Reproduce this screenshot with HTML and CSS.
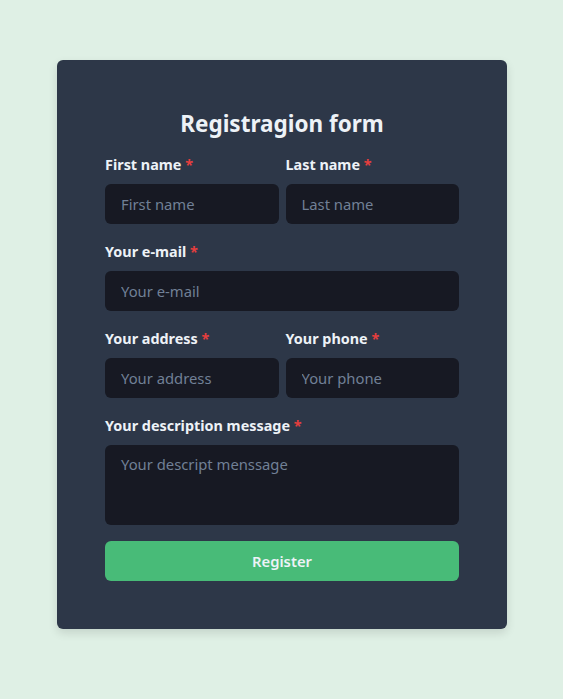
FILE: index.html
```html
<!DOCTYPE html>
<html lang="en">
<head>
<meta charset="utf-8">
<title>Registration form</title>
<link rel="stylesheet" href="styles.css">
</head>
<body>
<main class="page">
  <form class="card">
    <h1 class="title">Registragion form</h1>
    <div class="row">
      <div class="field">
        <label class="label">First name <span class="req">*</span></label>
        <input class="input" type="text" placeholder="First name">
      </div>
      <div class="field">
        <label class="label">Last name <span class="req">*</span></label>
        <input class="input" type="text" placeholder="Last name">
      </div>
    </div>
    <div class="field">
      <label class="label">Your e-mail <span class="req">*</span></label>
      <input class="input" type="email" placeholder="Your e-mail">
    </div>
    <div class="row">
      <div class="field">
        <label class="label">Your address <span class="req">*</span></label>
        <input class="input" type="text" placeholder="Your address">
      </div>
      <div class="field">
        <label class="label">Your phone <span class="req">*</span></label>
        <input class="input" type="text" placeholder="Your phone">
      </div>
    </div>
    <div class="field">
      <label class="label">Your description message <span class="req">*</span></label>
      <textarea class="input textarea" placeholder="Your descript menssage"></textarea>
    </div>
    <button class="button" type="button">Register</button>
  </form>
</main>
</body>
</html>
```
FILE: styles.css
```css
* { box-sizing: border-box; }
html, body { margin: 0; padding: 0; }
body {
  background: #dff0e5;
  font-family: "Noto Sans", "Open Sans", sans-serif;
  color: #edf2f7;
  width: 563px;
  height: 699px;
}
.page {
  padding-top: 60px;
  padding-left: 57px;
}
.card {
  width: 450px;
  background: #2d3748;
  border-radius: 6px;
  padding: 48px;
  box-shadow: 0 4px 10px rgba(0, 0, 0, 0.12);
  display: flex;
  flex-direction: column;
  gap: 15px;
}
.title {
  margin: 0 0 -3px;
  font-size: 22.5px;
  line-height: 32px;
  font-weight: 700;
  text-align: center;
  color: #edf2f7;
}
.row {
  display: flex;
  gap: 7px;
}
.row .field { flex: 1; min-width: 0; }
.field {
  display: flex;
  flex-direction: column;
  gap: 7px;
}
.label {
  padding-top: 1px;
  font-size: 14.4px;
  line-height: 24px;
  font-weight: 700;
  color: #edf2f7;
}
.req { color: #e53e3e; }
.input {
  height: 40px;
  width: 100%;
  border: none;
  border-radius: 6px;
  background: #171923;
  color: #e2e8f0;
  padding: 0 16px;
  font-family: inherit;
  font-size: 14.8px;
  outline: none;
}
.input::placeholder { color: #718096; opacity: 1; }
.textarea {
  height: 80px;
  padding: 7px 16px;
  resize: none;
  line-height: 24px;
  display: block;
}
.button {
  margin-top: 1px;
  height: 40px;
  border: none;
  border-radius: 6px;
  background: #48bb78;
  color: #edf2f7;
  font-family: inherit;
  font-size: 14.8px;
  font-weight: 600;
}
```
